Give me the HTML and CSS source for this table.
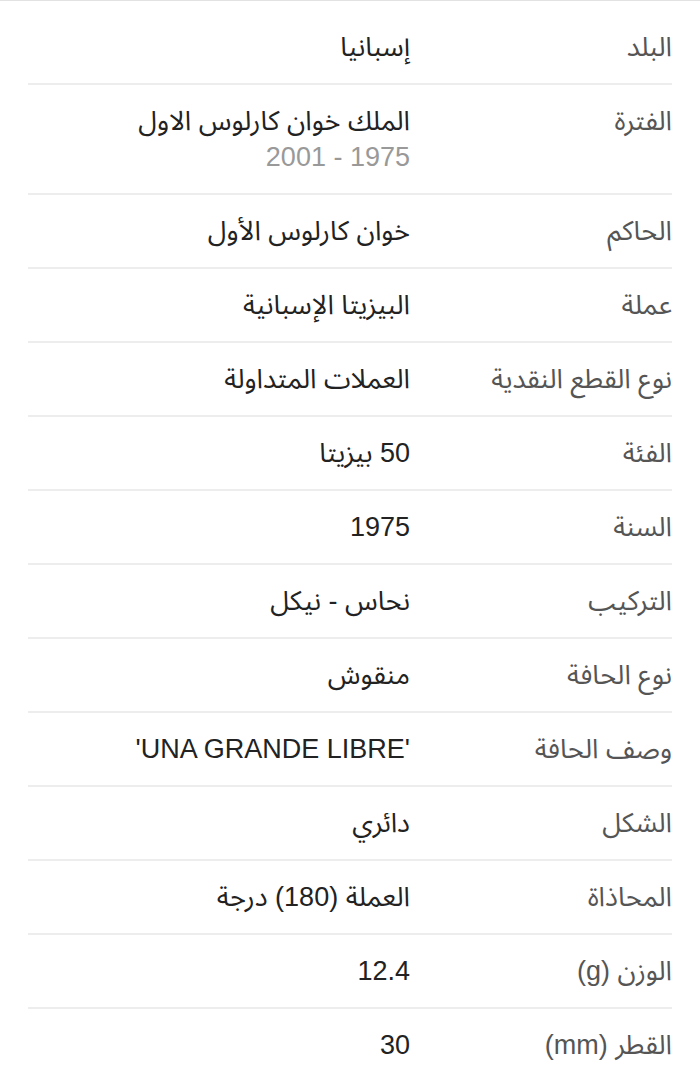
FILE: index.html
```html
<!DOCTYPE html>
<html lang="ar" dir="rtl">
<head>
<meta charset="utf-8">
<title>تفاصيل العملة</title>
<link rel="stylesheet" href="styles.css">
</head>
<body>
<div class="sheet">
  <div class="row"><div class="label">البلد</div><div class="value">إسبانيا</div></div>
  <div class="row"><div class="label">الفترة</div><div class="value">الملك خوان كارلوس الاول<span class="sub">1975 - 2001</span></div></div>
  <div class="row"><div class="label">الحاكم</div><div class="value">خوان كارلوس الأول</div></div>
  <div class="row"><div class="label">عملة</div><div class="value">البيزيتا الإسبانية</div></div>
  <div class="row"><div class="label">نوع القطع النقدية</div><div class="value">العملات المتداولة</div></div>
  <div class="row"><div class="label">الفئة</div><div class="value">50 بيزيتا</div></div>
  <div class="row"><div class="label">السنة</div><div class="value">1975</div></div>
  <div class="row"><div class="label">التركيب</div><div class="value">نحاس - نيكل</div></div>
  <div class="row"><div class="label">نوع الحافة</div><div class="value">منقوش</div></div>
  <div class="row"><div class="label">وصف الحافة</div><div class="value">'UNA GRANDE LIBRE'</div></div>
  <div class="row"><div class="label">الشكل</div><div class="value">دائري</div></div>
  <div class="row"><div class="label">المحاذاة</div><div class="value">العملة (180) درجة</div></div>
  <div class="row"><div class="label">الوزن (g)</div><div class="value">12.4</div></div>
  <div class="row"><div class="label">القطر (mm)</div><div class="value">30</div></div>
</div>
</body>
</html>
```
FILE: styles.css
```css
html, body {
  margin: 0;
  padding: 0;
  background: #ffffff;
}
body {
  border-top: 1px solid #e2e2e2;
  font-family: "Liberation Sans", "Noto Sans Arabic", "Noto Naskh Arabic", "DejaVu Sans", sans-serif;
  font-size: 27px;
  color: #222222;
  overflow: hidden;
}
.sheet {
  padding: 10px 28px 0 28px;
}
.row {
  display: grid;
  grid-template-columns: 262px 1fr;
  padding: 18px 0;
  line-height: 36px;
  border-bottom: 2px solid #ededed;
}
.label {
  color: #555555;
}
.value {
  color: #222222;
}
.sub {
  display: block;
  color: #999999;
}
```
